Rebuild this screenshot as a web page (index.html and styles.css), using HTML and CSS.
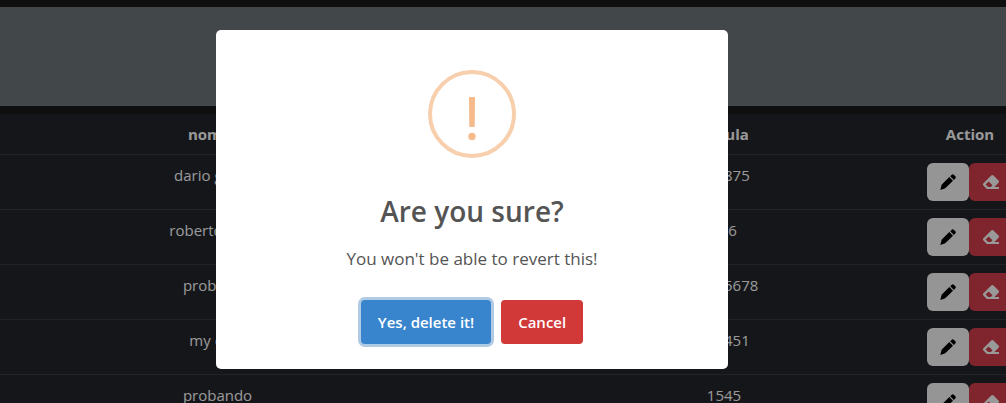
FILE: index.html
```html
<!DOCTYPE html>
<html lang="en">
<head>
<meta charset="utf-8">
<meta name="viewport" content="width=device-width, initial-scale=1">
<title>Are you sure?</title>
<link rel="stylesheet" href="styles.css">
</head>
<body>
<svg class="sprite" aria-hidden="true">
  <symbol id="pencil" viewBox="0 0 16 16">
    <path d="M11.500.900a1.800 1.800 0 0 1 2.500 0l1.200 1.200a1.800 1.800 0 0 1 0 2.500L13.900 5.900 10.200 2.200zM9.300 3.100 13 6.800 6 13.600a3 3 0 0 1-1.300.8L.300 15.900 1.500 11.300a3 3 0 0 1 .8-1.300z"/>
  </symbol>
  <symbol id="eraser" viewBox="0 0 16 16">
    <path fill-rule="evenodd" d="M8.200 1.500a1.600 1.600 0 0 1 2.300 0l5 5a1.600 1.600 0 0 1 0 2.300L11.400 13H16v2H4.700a2 2 0 0 1-1.400-.6L.500 11.600a1.600 1.600 0 0 1 0-2.300zM5.700 7.500 2.500 10.500 5.100 13H7.900L9.500 11.300z"/>
  </symbol>
</svg>
<main class="page">
  <section class="banner"></section>
  <div class="table-wrap">
    <table class="table">
      <colgroup><col class="col-name"><col class="col-gap"><col class="col-id"><col class="col-action"></colgroup>
      <thead>
        <tr><th>nombre</th><th></th><th>cedula</th><th>Action</th></tr>
      </thead>
      <tbody>
        <tr><td>dario gomez</td><td></td><td>123875</td><td><div class="actions"><button class="btn btn-light" aria-label="Edit"><svg><use href="#pencil"/></svg></button><button class="btn btn-danger" aria-label="Delete"><svg><use href="#eraser"/></svg></button></div></td></tr>
        <tr><td>roberto perez</td><td></td><td>456</td><td><div class="actions"><button class="btn btn-light" aria-label="Edit"><svg><use href="#pencil"/></svg></button><button class="btn btn-danger" aria-label="Delete"><svg><use href="#eraser"/></svg></button></div></td></tr>
        <tr><td>probando</td><td></td><td>12345678</td><td><div class="actions"><button class="btn btn-light" aria-label="Edit"><svg><use href="#pencil"/></svg></button><button class="btn btn-danger" aria-label="Delete"><svg><use href="#eraser"/></svg></button></div></td></tr>
        <tr><td>my casa</td><td></td><td>145451</td><td><div class="actions"><button class="btn btn-light" aria-label="Edit"><svg><use href="#pencil"/></svg></button><button class="btn btn-danger" aria-label="Delete"><svg><use href="#eraser"/></svg></button></div></td></tr>
        <tr><td>probando</td><td></td><td>1545</td><td><div class="actions"><button class="btn btn-light" aria-label="Edit"><svg><use href="#pencil"/></svg></button><button class="btn btn-danger" aria-label="Delete"><svg><use href="#eraser"/></svg></button></div></td></tr>
      </tbody>
    </table>
  </div>
</main>
<div class="backdrop">
  <div class="modal" role="dialog" aria-modal="true" aria-labelledby="modal-title" aria-describedby="modal-text">
    <svg class="modal-icon" viewBox="0 0 88 88" aria-hidden="true">
      <circle cx="44" cy="44" r="42" fill="none" stroke="#f7cfac" stroke-width="4"/>
      <path d="M41 27h6l-.3 30h-5.400z" fill="#f5bb8b"/>
      <circle cx="44" cy="66.500" r="3.700" fill="#f5bb8b"/>
    </svg>
    <h2 class="modal-title" id="modal-title">Are you sure?</h2>
    <p class="modal-text" id="modal-text">You won't be able to revert this!</p>
    <div class="modal-actions">
      <button class="modal-btn confirm">Yes, delete it!</button>
      <button class="modal-btn cancel">Cancel</button>
    </div>
  </div>
</div>
</body>
</html>
```
FILE: styles.css
```css
* { box-sizing: border-box; }

body {
  margin: 0;
  height: 100vh;
  overflow: hidden;
  background: #191919;
  color: #fff;
  font: 15px/24px "Open Sans", "Noto Sans", sans-serif;
}

.sprite { display: none; }

.page {
  display: flex;
  flex-direction: column;
  gap: 8px;
  height: 100%;
  padding-top: 7px;
  overflow: hidden;
}

.banner {
  flex: none;
  height: 99px;
  background: #6e777b;
}

.table-wrap {
  min-height: 0;
  overflow: hidden;
}

.table {
  width: calc(100% + 15px);
  table-layout: fixed;
  border-collapse: separate;
  border-spacing: 0;
  background: #23252b;
  text-align: center;
}

.col-name { width: 435px; }
.col-id { width: 390px; }
.col-action { width: 102px; }

.table th,
.table td {
  padding: 8px;
  border-bottom: 1px solid #373b3e;
  vertical-align: top;
}

.actions { display: flex; }

.btn {
  display: flex;
  align-items: center;
  justify-content: center;
  width: 42px;
  height: 38px;
  padding: 0;
  border: 0;
  border-radius: 6px;
}

.btn svg {
  width: 16px;
  height: 16px;
  fill: currentColor;
}

.btn-light { background: #f8f9fa; color: #000; }
.btn-danger { width: 44px; background: #d63d4b; color: #fff; }

.backdrop {
  position: fixed;
  inset: 0;
  display: flex;
  align-items: flex-start;
  justify-content: center;
  padding: 30px 62px 0 0;
  background: rgba(0, 0, 0, 0.4);
}

.modal {
  display: flex;
  flex-direction: column;
  align-items: center;
  width: 512px;
  max-width: 100%;
  padding: 40px 20px 25px;
  border-radius: 5px;
  background: #fff;
  color: #545454;
  text-align: center;
}

.modal-icon {
  width: 88px;
  height: 88px;
}

.modal-title {
  margin: 33px 0 0;
  font-size: 28px;
  font-weight: 600;
  line-height: 40px;
}

.modal-text {
  margin: 15px 0 28px;
  font-size: 17px;
  line-height: 26px;
}

.modal-actions {
  display: flex;
  gap: 10px;
}

.modal-btn {
  height: 44px;
  padding: 0 17px;
  border: 0;
  border-radius: 4px;
  color: #fff;
  font: inherit;
  font-weight: 600;
}

.confirm {
  background: #3885ce;
  box-shadow: 0 0 0 3px #b1cae3;
}

.cancel { background: #d13838; }
```
